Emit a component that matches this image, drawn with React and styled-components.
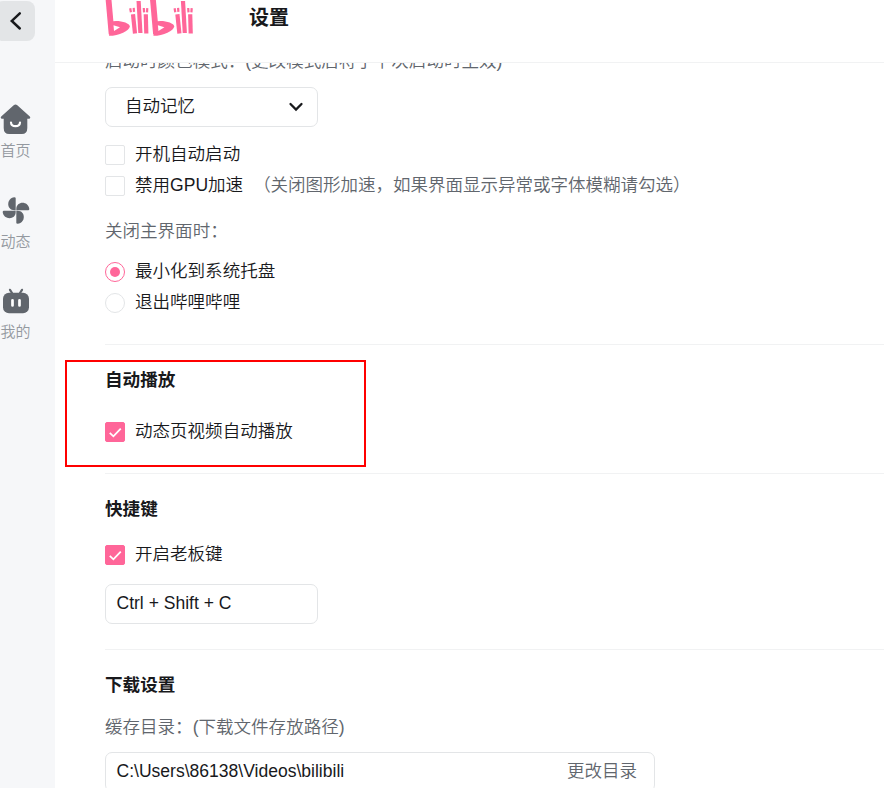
import React from "react";
import styled, { createGlobalStyle } from "styled-components";

const GlobalStyle = createGlobalStyle`
  * {
    box-sizing: border-box;
  }

  body {
    margin: 0;
    overflow: hidden;
    background: #fff;
    color: #18191c;
    font-family: "Liberation Sans", "Noto Sans CJK SC", sans-serif;
    font-size: 17.55px;
    font-weight: 350;
  }
`;

const Page = styled.div`
  position: relative;
  display: flex;
  width: 884px;
  height: 788px;
  overflow: hidden;
`;

const Sidebar = styled.nav`
  display: flex;
  flex-direction: column;
  flex: none;
  width: 55px;
  padding-top: 1px;
  background: #f6f7f9;
`;

const BackButton = styled.button`
  display: flex;
  align-items: center;
  width: 40px;
  height: 40px;
  margin: 0 0 60px -5px;
  padding: 0 0 0 13px;
  border: 0;
  border-radius: 8px;
  background: #e3e5e7;
`;

const NavItem = styled.div`
  display: flex;
  flex-direction: column;
  align-items: center;
  width: 31px;
  height: 90.5px;
  color: #9499a0;
  font-size: 15px;
  line-height: 22px;
  white-space: nowrap;

  svg {
    flex: none;
    margin-bottom: 3px;
  }
`;

const Main = styled.main`
  display: flex;
  flex-direction: column;
  flex: 1;
  min-width: 0;
`;

const Header = styled.header`
  display: flex;
  flex: none;
  height: 63px;
  padding-left: 50px;
  border-bottom: 1px solid #f1f2f3;
`;

const Title = styled.h1`
  margin: 0 0 0 55px;
  font-size: 20px;
  font-weight: 700;
  line-height: 37px;
`;

const Body = styled.div`
  flex: 1;
  padding-left: 50px;
  overflow: hidden;
`;

const Section = styled.section`
  padding: ${({ $top }) => $top || 0}px 0 ${({ $bottom }) => $bottom}px;
  border-bottom: 1px solid #f1f2f3;
`;

const SectionTitle = styled.h2`
  margin: 0;
  font-size: 17.6px;
  font-weight: 700;
  line-height: 24px;
`;

const Hint = styled.div`
  height: 24px;
  margin-top: ${({ $gap }) => $gap}px;
  color: #61666d;
  line-height: 24px;
  white-space: nowrap;
`;

const Field = styled.div`
  display: flex;
  align-items: center;
  justify-content: space-between;
  width: ${({ $wide }) => ($wide ? 550 : 213)}px;
  height: 40px;
  margin-top: ${({ $gap }) => $gap}px;
  padding: 0 ${({ $wide }) => ($wide ? 17 : 13)}px 2px ${({ $indent }) => $indent || 10.5}px;
  border: 1px solid #e3e5e7;
  border-radius: 7px;
  line-height: 24px;
`;

const FieldAction = styled.span`
  color: #61666d;
`;

const Option = styled.label`
  display: flex;
  align-items: center;
  height: 30px;
  margin-top: ${({ $gap }) => $gap}px;
  white-space: nowrap;
`;

const OptionText = styled.span`
  padding-bottom: 2px;
  line-height: 24px;
`;

const Box = styled.span`
  display: flex;
  align-items: center;
  justify-content: center;
  flex: none;
  width: 20px;
  height: 20px;
  margin-right: 10px;
  border: 1px solid ${({ $on }) => ($on ? "#ff6699" : "#e3e5e7")};
  border-radius: 2px;
  background: ${({ $on }) => ($on ? "#ff6699" : "#fff")};
`;

const Radio = styled(Box)`
  border-radius: 50%;
  background: #fff;

  &::after {
    content: "";
    width: 10px;
    height: 10px;
    border-radius: 50%;
    background: ${({ $on }) => ($on ? "#ff6699" : "transparent")};
  }
`;

const Note = styled(OptionText)`
  margin-left: 10px;
  padding-bottom: 3px;
  color: #61666d;
  font-size: 17.5px;
`;

const Highlight = styled.div`
  position: absolute;
  left: 65px;
  top: 360px;
  width: 301px;
  height: 107px;
  border: 2px solid #f00;
  pointer-events: none;
`;

const LogoHalf = ({ x = 0 }) => (
  <g transform={`translate(${x} 0)`} stroke="#ff6699" fill="none">
    <line x1="3.4" y1="-2" x2="6.6" y2="34" strokeWidth="5.8" />
    <path
      d="M5.5 21.8C13 19.6 24.6 22.8 24.8 26.4C24.5 30.5 14 35.8 4 35.8Z"
      fill="#ff6699"
      stroke="none"
    />
    <path d="M8.5 25.2L15 27.3L9 31Z" fill="#fff" stroke="none" />
    <line x1="25.2" y1="8.3" x2="25.9" y2="12.3" strokeWidth="2.2" />
    <line x1="28.7" y1="7.8" x2="29" y2="11.8" strokeWidth="2.2" />
    <line x1="28" y1="14.3" x2="30" y2="33.5" strokeWidth="4.2" />
    <line x1="33.6" y1="1" x2="35.4" y2="33" strokeWidth="4.2" />
    <line x1="38.8" y1="8" x2="39.1" y2="12.3" strokeWidth="2.2" />
    <line x1="42.3" y1="8.2" x2="42" y2="12.3" strokeWidth="2.2" />
    <line x1="40.8" y1="14.3" x2="41.3" y2="33.5" strokeWidth="4.2" />
  </g>
);

const Logo = () => (
  <svg width="89" height="38" viewBox="0 0 89 38">
    <LogoHalf />
    <LogoHalf x={44.4} />
  </svg>
);

const HomeIcon = () => (
  <svg width="31" height="36" viewBox="0 0 31 36">
    <path
      d="M13.7 4.3Q15.5 2.8 17.3 4.3L29.8 15.5Q31.1 17.5 28.9 17.7H27.3V27Q27.3 33 21.8 33H9.2Q3.7 33 3.7 27V17.7H2.1Q-.1 17.5 1.2 15.5Z"
      fill="#61666d"
    />
    <path d="M11 21.5C11.3 26.4 19.7 26.4 20 21.5" fill="none" stroke="#fff" strokeWidth="2.2" strokeLinecap="round" />
  </svg>
);

const FanIcon = () => (
  <svg width="31" height="36" viewBox="0 0 31 36">
    {[0, 90, 180, 270].map(angle => (
      <path
        key={angle}
        d="M15.7 18.2V6.3Q15.7 5.2 14.4 5.2C6 6.2 6.3 18.2 14.4 18.2Z"
        transform={`rotate(${angle} 16 18.5)`}
        fill="#61666d"
      />
    ))}
  </svg>
);

const TvIcon = () => (
  <svg width="31" height="36" viewBox="0 0 31 36">
    <path d="M10 7.8L12 11M22 7.8L20 11" stroke="#61666d" strokeWidth="2.2" strokeLinecap="round" />
    <rect x="3" y="10.8" width="26" height="20.5" rx="6" fill="#61666d" />
    <path d="M12.5 18.3V23.5M19.5 18.3V23.5" stroke="#fff" strokeWidth="2.7" strokeLinecap="round" />
  </svg>
);

const Tick = () => (
  <svg width="20" height="20" viewBox="0 0 20 20">
    <path d="M4.2 11L8.2 14.8L16.4 6.2" fill="none" stroke="#fff" strokeWidth="2" />
  </svg>
);

const navItems = [
  { label: "首页", Icon: HomeIcon },
  { label: "动态", Icon: FanIcon },
  { label: "我的", Icon: TvIcon },
];

const Checkbox = ({ checked, gap, label, note }) => (
  <Option $gap={gap}>
    <Box $on={checked}>{checked && <Tick />}</Box>
    <OptionText>{label}</OptionText>
    {note && <Note>{note}</Note>}
  </Option>
);

export default function App() {
  return (
    <Page>
      <GlobalStyle />
      <Sidebar>
        <BackButton aria-label="back">
          <svg width="14" height="20" viewBox="0 0 14 20">
            <path d="M11.8 2.3L3.8 9.9L11.8 17.5" fill="none" stroke="#18191c" strokeWidth="2.5" strokeLinecap="round" />
          </svg>
        </BackButton>
        {navItems.map(({ label, Icon }) => (
          <NavItem key={label}>
            <Icon />
            {label}
          </NavItem>
        ))}
      </Sidebar>
      <Main>
        <Header>
          <Logo />
          <Title>设置</Title>
        </Header>
        <Body>
          <Section $bottom={26}>
            <Hint $gap={-14}>启动时颜色模式：(更改模式后将于下次启动时生效)</Hint>
            <Field $gap={14} $indent={19}>
              自动记忆
              <svg width="16" height="12" viewBox="0 0 16 12">
                <path d="M2.5 4L8 9.5L13.5 4" fill="none" stroke="#18191c" strokeWidth="2.3" strokeLinecap="round" />
              </svg>
            </Field>
            <Checkbox gap={13} label="开机自动启动" />
            <Checkbox gap={1} label="禁用GPU加速" note="（关闭图形加速，如果界面显示异常或字体模糊请勾选）" />
            <Hint $gap={18}>关闭主界面时：</Hint>
            <Option $gap={14}>
              <Radio $on />
              <OptionText>最小化到系统托盘</OptionText>
            </Option>
            <Option $gap={1}>
              <Radio />
              <OptionText>退出哔哩哔哩</OptionText>
            </Option>
          </Section>
          <Section $top={23} $bottom={26}>
            <SectionTitle>自动播放</SectionTitle>
            <Checkbox checked gap={25} label="动态页视频自动播放" />
          </Section>
          <Section $top={23} $bottom={25}>
            <SectionTitle>快捷键</SectionTitle>
            <Checkbox checked gap={19} label="开启老板键" />
            <Field $gap={14}>Ctrl + Shift + C</Field>
          </Section>
          <Section $top={23} $bottom={25}>
            <SectionTitle>下载设置</SectionTitle>
            <Hint $gap={18}>缓存目录：(下载文件存放路径)</Hint>
            <Field $gap={13} $wide>
              C:\Users\86138\Videos\bilibili
              <FieldAction>更改目录</FieldAction>
            </Field>
          </Section>
        </Body>
      </Main>
      <Highlight />
    </Page>
  );
}
